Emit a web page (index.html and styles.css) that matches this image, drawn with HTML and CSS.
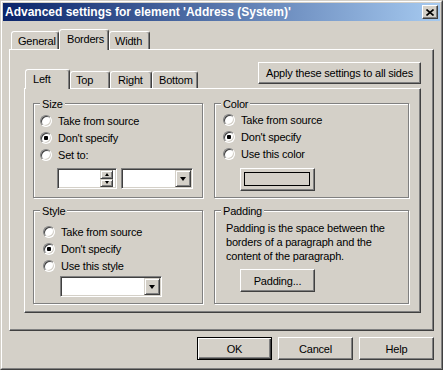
FILE: index.html
```html
<!DOCTYPE html>
<html lang="en">
<head>
    <meta charset="UTF-8">
    <title>Advanced settings for element 'Address (System)'</title>
    <link rel="stylesheet" href="styles.css">
</head>
<body>
    <div class="window">
        <div class="frame">
            <div class="titlebar">
                <span class="title">Advanced settings for element 'Address (System)'</span>
                <button class="close" type="button">
                    <svg width="8" height="7" viewBox="0 0 8 7"><path d="M0.5 0.5 L7.5 6.5 M7.5 0.5 L0.5 6.5" stroke="#000" stroke-width="1.6" fill="none"/></svg>
                </button>
            </div>

            <div class="body">
                <div class="tabs outer-tabs">
                    <div class="tab t-general">General</div>
                    <div class="tab active t-borders">Borders</div>
                    <div class="tab t-width">Width</div>
                </div>

                <div class="panel outer-panel">
                    <div class="sub-head">
                        <div class="tabs inner-tabs">
                            <div class="tab active t-left">Left</div>
                            <div class="tab t-top">Top</div>
                            <div class="tab t-right">Right</div>
                            <div class="tab t-bottom">Bottom</div>
                        </div>
                        <button class="btn apply" type="button">Apply these settings to all sides</button>
                    </div>

                    <div class="panel inner-panel">
                        <div class="group g-size">
                            <span class="group-title">Size</span>
                            <label class="option"><span class="radio"></span>Take from source</label>
                            <label class="option"><span class="radio on"></span>Don't specify</label>
                            <label class="option"><span class="radio"></span>Set to:</label>
                            <div class="field-row">
                                <div class="field spin">
                                    <div class="spin-btns">
                                        <span class="mini-btn"><i class="arrow up"></i></span>
                                        <span class="mini-btn"><i class="arrow down"></i></span>
                                    </div>
                                </div>
                                <div class="field combo size-combo">
                                    <span class="drop-btn"><i class="arrow big"></i></span>
                                </div>
                            </div>
                        </div>

                        <div class="group g-color">
                            <span class="group-title">Color</span>
                            <label class="option"><span class="radio"></span>Take from source</label>
                            <label class="option"><span class="radio on"></span>Don't specify</label>
                            <label class="option"><span class="radio"></span>Use this color</label>
                            <button class="btn swatch-btn" type="button"><span class="swatch"></span></button>
                        </div>

                        <div class="group g-style">
                            <span class="group-title">Style</span>
                            <label class="option"><span class="radio"></span>Take from source</label>
                            <label class="option"><span class="radio on"></span>Don't specify</label>
                            <label class="option"><span class="radio"></span>Use this style</label>
                            <div class="field combo style-combo">
                                <span class="drop-btn"><i class="arrow big"></i></span>
                            </div>
                        </div>

                        <div class="group g-padding">
                            <span class="group-title">Padding</span>
                            <p class="note">Padding is the space between the<br>borders of a paragraph and the<br>content of the paragraph.</p>
                            <button class="btn padding-btn" type="button">Padding...</button>
                        </div>
                    </div>
                </div>

                <div class="actions">
                    <button class="btn default" type="button">OK</button>
                    <button class="btn" type="button">Cancel</button>
                    <button class="btn" type="button">Help</button>
                </div>
            </div>
        </div>
    </div>
</body>
</html>
```

FILE: styles.css
```css
body {
    margin: 0;
    font-family: "Liberation Sans", Arial, sans-serif;
    font-size: 11px;
    letter-spacing: -0.2px;
    color: #000;
    background: #d4d0c8;
}
* {
    box-sizing: border-box;
}
.window {
    width: 443px;
    height: 370px;
    background: #d4d0c8;
    border: 1px solid;
    border-color: #d4d0c8 #404040 #404040 #d4d0c8;
}
.frame {
    height: 100%;
    border: 1px solid;
    border-color: #fff #808080 #808080 #fff;
    padding: 1px;
}
.titlebar {
    height: 18px;
    display: flex;
    align-items: center;
    justify-content: space-between;
    padding: 0 2px;
    background: linear-gradient(to right, #0a246a, #a6caf0);
    color: #fff;
    font-size: 12px;
    font-weight: bold;
    letter-spacing: 0;
}
.close {
    width: 16px;
    height: 14px;
    padding: 0;
    display: flex;
    align-items: center;
    justify-content: center;
    background: #d4d0c8;
    border: 1px solid;
    border-color: #fff #404040 #404040 #fff;
    box-shadow: inset -1px -1px 0 #808080;
}
.body {
    padding: 8px 6px 0 6px;
}

/* tabs */
.tabs {
    display: flex;
    align-items: flex-end;
}
.tab {
    height: 18px;
    display: flex;
    align-items: center;
    padding-left: 6px;
    background: #d4d0c8;
    border: 1px solid;
    border-bottom: none;
    border-color: #fff #404040 transparent #fff;
    border-radius: 3px 3px 0 0;
    box-shadow: inset -1px 0 0 #808080;
}
.tab.active {
    height: 21px;
    margin-bottom: -1px;
    padding-bottom: 2px;
    padding-left: 7px;
    z-index: 1;
}
.outer-tabs {
    height: 20px;
    padding-left: 2px;
}
.t-general { width: 48px; }
.t-borders { width: 50px; }
.t-width { width: 41px; padding-left: 5px; }

.inner-tabs {
    height: 26px;
    padding-left: 1px;
}
.inner-tabs .tab {
    height: 17px;
}
.inner-tabs .tab.active {
    height: 20px;
}
.t-left { width: 45px; }
.t-top { width: 40px; padding-left: 5px; }
.t-right { width: 42px; padding-left: 7px; }
.t-bottom { width: 46px; }

/* panels */
.panel {
    border: 1px solid;
    border-color: #fff #404040 #404040 #fff;
    box-shadow: inset -1px -1px 0 #808080;
}
.outer-panel {
    width: 425px;
    height: 282px;
    padding: 12px 12px 17px 14px;
}
.sub-head {
    height: 26px;
    display: flex;
    justify-content: space-between;
}
.inner-panel {
    height: 225px;
    padding: 14px 11px 8px 8px;
    display: grid;
    grid-template-columns: 170px 195px;
    grid-template-rows: 95px 94px;
    column-gap: 11px;
    row-gap: 12px;
}

/* buttons */
.btn {
    font: inherit;
    letter-spacing: inherit;
    color: #000;
    width: 75px;
    height: 23px;
    padding: 0;
    background: #d4d0c8;
    border: 1px solid;
    border-color: #fff #404040 #404040 #fff;
    box-shadow: inset -1px -1px 0 #808080;
}
.btn.default {
    border-color: #000;
    box-shadow: inset 1px 1px 0 #fff, inset -1px -1px 0 #404040, inset -2px -2px 0 #808080;
}
.apply {
    width: 163px;
    height: 22px;
}

/* group boxes */
.group {
    position: relative;
    border: 1px solid #808080;
    box-shadow: inset 1px 1px 0 #fff, 1px 1px 0 #fff;
}
.group-title {
    position: absolute;
    top: -6px;
    left: 6px;
    line-height: 13px;
    padding: 0 2px;
    background: #d4d0c8;
}
.g-size { padding: 8px 0 0 6px; }
.g-color { padding: 7px 0 0 8px; }
.g-style { padding: 12px 0 0 9px; }
.g-padding { padding: 10px 8px 0 11px; }

.option {
    height: 17px;
    display: flex;
    align-items: center;
}
.radio {
    width: 12px;
    height: 12px;
    margin-right: 6px;
    border-radius: 50%;
    background: #fff;
    border: 1px solid;
    border-color: #808080 #fff #fff #808080;
    box-shadow: inset 1px 1px 0 #404040, inset -1px -1px 0 #d4d0c8;
}
.radio.on {
    background: radial-gradient(circle at 50% 50%, #000 0 2px, #fff 2.5px);
}

/* text fields */
.field {
    height: 21px;
    display: flex;
    justify-content: flex-end;
    padding: 1px;
    background: #fff;
    border: 1px solid;
    border-color: #808080 #fff #fff #808080;
    box-shadow: inset 1px 1px 0 #404040, inset -1px -1px 0 #d4d0c8;
}
.field-row {
    display: flex;
    gap: 4px;
    margin-top: 5px;
    padding-left: 17px;
}
.spin {
    width: 60px;
    padding-right: 3px;
}
.size-combo { width: 72px; }
.style-combo {
    width: 102px;
    margin: 2px 0 0 17px;
}
.spin-btns {
    width: 13px;
    display: flex;
    flex-direction: column;
}
.mini-btn, .drop-btn {
    display: flex;
    align-items: center;
    justify-content: center;
    background: #d4d0c8;
    border: 1px solid;
    border-color: #d4d0c8 #404040 #404040 #d4d0c8;
    box-shadow: inset 1px 1px 0 #fff, inset -1px -1px 0 #808080;
}
.mini-btn {
    flex: 1;
}
.drop-btn {
    width: 16px;
}
.arrow {
    width: 0;
    height: 0;
    border-left: 2.5px solid transparent;
    border-right: 2.5px solid transparent;
}
.arrow.up { border-bottom: 3px solid #000; }
.arrow.down { border-top: 3px solid #000; }
.arrow.big {
    border-left-width: 3.5px;
    border-right-width: 3.5px;
    border-top: 4px solid #000;
}

.swatch-btn {
    display: block;
    margin: 6px 0 0 17px;
    padding: 3px 4px 4px 3px;
}
.swatch {
    display: block;
    height: 100%;
    border: 1px solid #000;
    background: #d4d0c8;
}
.note {
    margin: 0;
    line-height: 14px;
}
.padding-btn {
    display: block;
    margin: 6px 0 0 14px;
}

.actions {
    display: flex;
    justify-content: flex-end;
    gap: 6px;
    margin-top: 6px;
}
```
